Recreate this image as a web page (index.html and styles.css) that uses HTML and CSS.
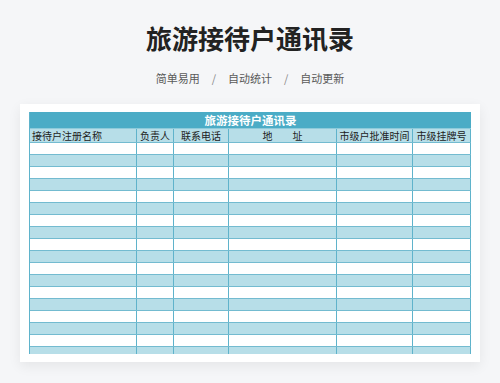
FILE: index.html
```html
<!DOCTYPE html>
<html lang="zh-CN">
<head>
<meta charset="utf-8">
<title>旅游接待户通讯录</title>
<link rel="stylesheet" href="styles.css">
</head>
<body>
<header class="hero">
  <h1 class="hero-title">旅游接待户通讯录</h1>
  <p class="hero-sub"><span>简单易用</span><span class="sep">/</span><span>自动统计</span><span class="sep">/</span><span>自动更新</span></p>
</header>
<main class="card">
  <div class="sheet">
    <div class="sheet-title">旅游接待户通讯录</div>
    <div class="row head">
      <div class="c c1 left">接待户注册名称</div>
      <div class="c c2">负责人</div>
      <div class="c c3">联系电话</div>
      <div class="c c4">地　　址</div>
      <div class="c c5">市级户批准时间</div>
      <div class="c c6">市级挂牌号</div>
    </div>
    <div id="rows"></div>
  </div>
</main>
<script>
  var host = document.getElementById('rows');
  for (var i = 0; i < 18; i++) {
    var r = document.createElement('div');
    r.className = 'row ' + (i % 2 === 0 ? 'white' : 'blue');
    for (var j = 1; j <= 6; j++) {
      var c = document.createElement('div');
      c.className = 'c c' + j;
      r.appendChild(c);
    }
    host.appendChild(r);
  }
</script>
</body>
</html>
```
FILE: styles.css
```css
* { box-sizing: border-box; }
html, body { margin: 0; padding: 0; }
body {
  background: #f5f6f8;
  font-family: "Noto Sans CJK SC", "Noto Sans", sans-serif;
  width: 500px;
  height: 383px;
  overflow: hidden;
}
.hero { text-align: center; padding-top: 20px; }
.hero-title {
  margin: 0;
  font-size: 26px;
  line-height: 36px;
  font-weight: 700;
  color: #222;
}
.hero-sub {
  margin: 13px 0 0;
  font-size: 11px;
  line-height: 18px;
  color: #5a5a5a;
  display: flex;
  justify-content: center;
}
.hero-sub .sep { margin: 0 12px; color: #888; }
.card {
  margin: 17px 20px 0;
  background: #fff;
  padding: 8px 9px;
  box-shadow: 0 4px 12px rgba(0,0,0,0.07);
}
.sheet {
  height: 242px;
  overflow: hidden;
  border-left: 1px solid #5fb3cb;
}
.sheet-title {
  height: 16px;
  background: #4bacc6;
  color: #fff;
  font-weight: 700;
  font-size: 11.5px;
  line-height: 16px;
  text-align: center;
}
.row { display: flex; height: 12px; border-bottom: 1px solid #73bbd0; }
.row.head { height: 15px; background: #b7dee8; border-top: 1px solid #8ecbdb; }
.row.blue { background: #b7dee8; }
.row.white { background: #fff; }
.c {
  border-right: 1px solid #5fb3cb;
  font-size: 10px;
  line-height: 13px;
  color: #222;
  text-align: center;
  white-space: nowrap;
  overflow: hidden;
}
.c.left { text-align: left; padding-left: 2px; }
.c1 { width: 107px; }
.c2 { width: 37px; }
.c3 { width: 55px; }
.c4 { width: 108px; }
.c5 { width: 76px; }
.c6 { width: 58px; }
```
